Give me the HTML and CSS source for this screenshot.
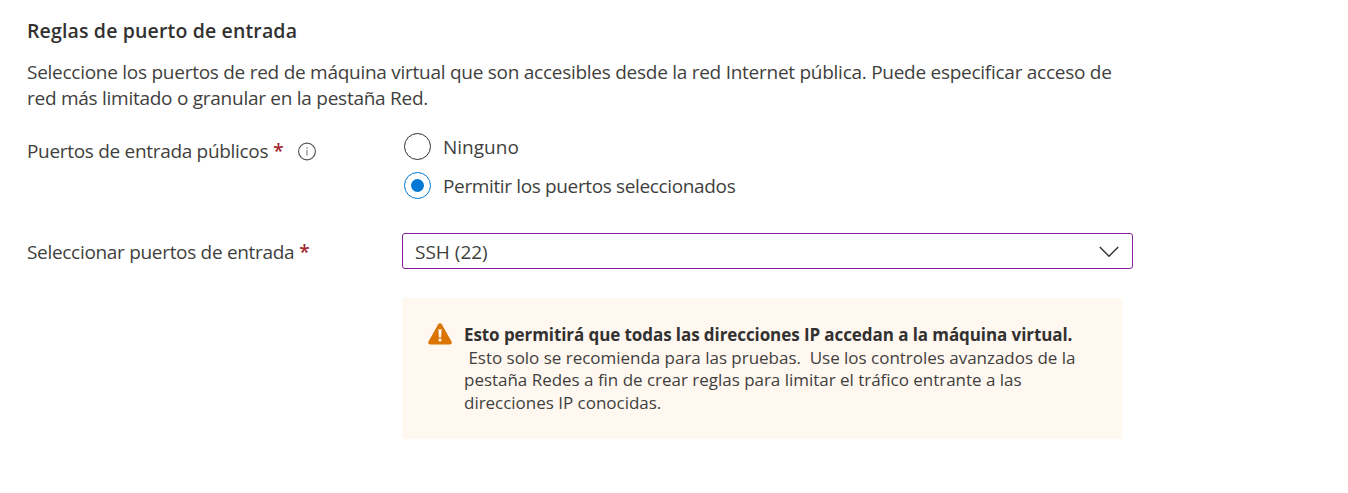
FILE: index.html
```html
<!DOCTYPE html>
<html lang="es">
<head>
<meta charset="utf-8">
<title>Reglas de puerto de entrada</title>
<link rel="stylesheet" href="styles.css">
</head>
<body>
<main class="section">
  <h1 class="title">Reglas de puerto de entrada</h1>
  <p class="intro">Seleccione los puertos de red de máquina virtual que son accesibles desde la red Internet pública. Puede especificar acceso de<br>red más limitado o granular en la pestaña Red.</p>
  <div class="field ports">
    <div class="label"><span class="label-text">Puertos de entrada públicos</span><span class="required">*</span>
      <svg class="info" viewBox="0 0 20 20" width="20" height="20"><circle cx="10" cy="10.5" r="8.4" fill="none" stroke="#555" stroke-width="1.2"/><path d="M10 9.1v5.4" stroke="#777" stroke-width="1.1"/><circle cx="10" cy="7" r=".8" fill="#777"/></svg>
    </div>
    <div class="options">
      <div class="option"><span class="radio"></span><span>Ninguno</span></div>
      <div class="option"><span class="radio checked"></span><span class="option-text">Permitir los puertos seleccionados</span></div>
    </div>
  </div>
  <div class="field select-field">
    <div class="label"><span class="label-text">Seleccionar puertos de entrada</span><span class="required">*</span></div>
    <div class="select"><span>SSH (22)</span>
      <svg class="chevron" viewBox="0 0 20 12" width="20" height="12"><path d="M.8 1 10 10.2 19.2 1" fill="none" stroke="#323130" stroke-width="1.4"/></svg>
    </div>
  </div>
  <div class="notice">
    <svg class="warn" viewBox="0 0 24 22" width="24" height="22"><path d="M10.2 1.3Q12-.8 13.8 1.3L23.6 18.7Q24.4 21.5 21.8 21.5H2.2Q-.4 21.5.4 18.7Z" fill="#db7500"/><path d="M10.4 6.2h3.2l-.5 8.2h-2.2Z" fill="#fff8f0"/><circle cx="12" cy="17" r="1.6" fill="#fff8f0"/></svg>
    <div class="message"><strong class="headline">Esto permitirá que todas las direcciones IP accedan a la máquina virtual.</strong><br>&nbsp;Esto solo se recomienda para las pruebas.&nbsp; Use los controles avanzados de la<br>pestaña Redes a fin de crear reglas para limitar el tráfico entrante a las<br>direcciones IP conocidas.</div>
  </div>
</main>
</body>
</html>
```
FILE: styles.css
```css
body {
  margin: 0;
  background: #fff;
  color: #413f3e;
  font: 19px/26px "Segoe UI", "Open Sans", "Noto Sans", sans-serif;
}
.section { padding: 17px 0 0 27px; }
.title { margin: 0; color: #323130; font-size: 19.5px; line-height: 28px; font-weight: 600; letter-spacing: .15px; }
.intro { margin: 14px 0 0; white-space: nowrap; letter-spacing: -.265px; }
.field { display: grid; grid-template-columns: 375px 731px; white-space: nowrap; }
.ports { margin-top: 20px; }
.label { display: flex; align-items: center; height: 39px; }
.label-text { letter-spacing: -.31px; }
.option-text { letter-spacing: -.36px; }
.required { margin-left: 5px; color: #a4262c; font-weight: 600; }
.info { margin-left: 13px; }
.option { display: flex; align-items: center; gap: 12px; height: 39px; padding-left: 2px; }
.options { margin-top: -4px; }
.radio {
  box-sizing: border-box;
  display: grid;
  place-items: center;
  width: 27px;
  height: 27px;
  border: 1px solid #323130;
  border-radius: 50%;
}
.checked { border-color: #0078d4; }
.checked::after { content: ""; width: 13px; height: 13px; border-radius: 50%; background: #0078d4; }
.select-field { margin-top: 26px; align-items: center; }
.select-field .label { box-sizing: border-box; padding-top: 2px; }
.select {
  box-sizing: border-box;
  display: flex;
  align-items: center;
  justify-content: space-between;
  height: 36px;
  padding: 2px 13px 0 12px;
  border: 1px solid #8a1ea0;
  border-radius: 3px;
}
.notice {
  box-sizing: border-box;
  display: flex;
  gap: 12px;
  width: 720px;
  height: 141px;
  margin: 28px 0 0 375px;
  padding: 25px 26px;
  border-radius: 3px;
  background: #fff8f0;
}
.message { padding-top: 1px; font-size: 17px; line-height: 22.6px; white-space: nowrap; letter-spacing: -.02px; }
.headline { color: #323130; letter-spacing: -.08px; }
```
